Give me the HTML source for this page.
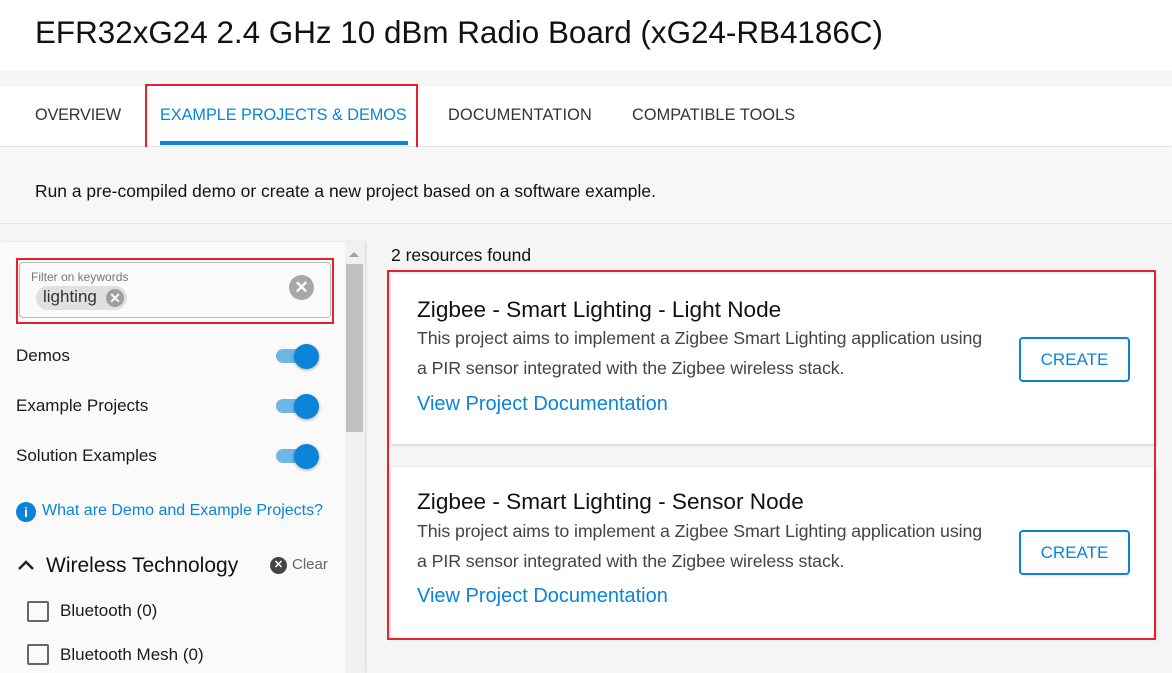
<!DOCTYPE html>
<html><head><meta charset="utf-8"><style>
*{box-sizing:border-box;margin:0;padding:0}
body{width:1172px;height:673px;overflow:hidden;background:#f5f5f5;font-family:"Liberation Sans",Arial,sans-serif;color:#1a1a1a;position:relative}
.abs{position:absolute;white-space:nowrap}
.red{position:absolute;border:2px solid #e8202a}
.tog{position:absolute;left:276px;width:42px;height:26px}
.tog .tr{position:absolute;left:0;top:6px;width:38px;height:14px;border-radius:7px;background:#6cb6e8}
.tog .kn{position:absolute;left:18px;top:1px;width:25px;height:25px;border-radius:50%;background:#0a84d8;box-shadow:0 1px 3px rgba(0,0,0,.35)}
.cb{position:absolute;left:27px;width:22px;height:21px;border:2px solid #666;border-radius:2px}
.card{position:absolute;left:391px;width:765px;background:#fff;box-shadow:0 1px 3px rgba(0,0,0,.18)}
.card h3{position:absolute;left:26px;font-size:22.6px;font-weight:normal;color:#111;top:23px;white-space:nowrap}
.card p{position:absolute;left:26px;top:49px;font-size:17.8px;line-height:30px;color:#444;width:578px;letter-spacing:-0.1px}
.card a{position:absolute;left:26px;top:119px;font-size:20px;color:#0a84d8;text-decoration:none;white-space:nowrap}
.btn{position:absolute;left:628px;top:63px;width:111px;height:45px;border:2px solid #0a84d8;border-radius:4px;color:#0a84d8;font-size:17px;text-align:center;line-height:41px}
</style></head><body>
<div class="abs" style="left:0;top:0;width:1172px;height:71px;background:#fff"></div>
<div class="abs" style="left:35px;top:15px;font-size:31.4px;color:#111">EFR32xG24 2.4 GHz 10 dBm Radio Board (xG24-RB4186C)</div>
<div class="abs" style="left:0;top:86px;width:1172px;height:60px;background:#fff;box-shadow:0 1px 2px rgba(0,0,0,.1)"></div>
<div class="abs" style="left:35px;top:106px;font-size:16.3px;color:#333;letter-spacing:-0.2px">OVERVIEW</div>
<div class="abs" style="left:160px;top:106px;font-size:16.3px;color:#0a84d8;letter-spacing:-0.05px">EXAMPLE PROJECTS &amp; DEMOS</div>
<div class="abs" style="left:160px;top:141px;width:248px;height:4px;background:#0a84d8"></div>
<div class="abs" style="left:448px;top:106px;font-size:16.3px;color:#333;letter-spacing:0.2px">DOCUMENTATION</div>
<div class="abs" style="left:632px;top:106px;font-size:16.3px;color:#333;letter-spacing:0.1px">COMPATIBLE TOOLS</div>
<div class="red" style="left:145px;top:84px;width:273px;height:77px"></div>
<div class="abs" style="left:0;top:147px;width:1172px;height:77px;background:#f7f7f7;border-bottom:1px solid #e2e2e2"></div>
<div class="abs" style="left:35px;top:181px;font-size:17.4px;color:#111;letter-spacing:0.03px">Run a pre-compiled demo or create a new project based on a software example.</div>

<div class="abs" style="left:0;top:242px;width:365px;height:431px;background:#fafafa;box-shadow:1px 0 2px rgba(0,0,0,.12)"></div>
<div class="abs" style="left:345px;top:242px;width:20px;height:431px;background:#f1f1f1"></div>
<div class="abs" style="left:346px;top:264px;width:17px;height:168px;background:#c1c1c1"></div>
<div class="abs" style="left:349px;top:252px;width:0;height:0;border-left:5px solid transparent;border-right:5px solid transparent;border-bottom:5px solid #a3a3a3"></div>
<div class="abs" style="left:19px;top:262px;width:312px;height:56px;border:1px solid #bbb;border-radius:4px;background:#fafafa"></div>
<div class="red" style="left:16px;top:258px;width:318px;height:66px"></div>
<div class="abs" style="left:31px;top:270px;font-size:12px;color:#777">Filter on keywords</div>
<div class="abs" style="left:36px;top:286px;width:91px;height:24px;border-radius:12px;background:#e0e0e0"></div>
<div class="abs" style="left:43px;top:287px;font-size:17px;color:#333">lighting</div>
<div class="abs" style="left:106px;top:289px;width:18px;height:18px;border-radius:50%;background:#9e9e9e;color:#fff;font-size:14px;line-height:18px;text-align:center;font-weight:bold">✕</div>
<div class="abs" style="left:289px;top:275px;width:25px;height:25px;border-radius:50%;background:#a8a8a8;color:#fff;font-size:17px;line-height:25px;text-align:center;font-weight:bold">✕</div>

<div class="abs" style="left:16px;top:346px;font-size:17px">Demos</div>
<div class="tog" style="top:343px"><div class="tr"></div><div class="kn"></div></div>
<div class="abs" style="left:16px;top:396px;font-size:17px">Example Projects</div>
<div class="tog" style="top:393px"><div class="tr"></div><div class="kn"></div></div>
<div class="abs" style="left:16px;top:446px;font-size:17px">Solution Examples</div>
<div class="tog" style="top:443px"><div class="tr"></div><div class="kn"></div></div>
<div class="abs" style="left:16px;top:502px;width:20px;height:20px;border-radius:50%;background:#0a84d8;color:#fff;font-size:14px;font-weight:bold;text-align:center;line-height:20px">i</div>
<div class="abs" style="left:42px;top:502px;font-size:16px;color:#0a84d8">What are Demo and Example Projects?</div>
<svg class="abs" style="left:16px;top:558px" width="20" height="14"><path d="M3 11 L10 4 L17 11" stroke="#222" stroke-width="2.5" fill="none"/></svg>
<div class="abs" style="left:46px;top:554px;font-size:21px;color:#111">Wireless Technology</div>
<div class="abs" style="left:270px;top:557px;width:17px;height:17px;border-radius:50%;background:#444;color:#fff;font-size:11px;line-height:17px;text-align:center;font-weight:bold">✕</div>
<div class="abs" style="left:292px;top:556px;font-size:15px;color:#666">Clear</div>
<div class="cb" style="top:601px"></div>
<div class="abs" style="left:60px;top:601px;font-size:17px">Bluetooth (0)</div>
<div class="cb" style="top:644px"></div>
<div class="abs" style="left:60px;top:645px;font-size:17px">Bluetooth Mesh (0)</div>

<div class="abs" style="left:391px;top:245px;font-size:17.5px;color:#111">2 resources found</div>
<div class="card" style="top:274px;height:170px"><h3>Zigbee - Smart Lighting - Light Node</h3><p>This project aims to implement a Zigbee Smart Lighting application using a PIR sensor integrated with the Zigbee wireless stack.</p><a>View Project Documentation</a><div class="btn">CREATE</div></div>
<div class="card" style="top:467px;height:171px"><h3 style="top:22px">Zigbee - Smart Lighting - Sensor Node</h3><p style="top:49px">This project aims to implement a Zigbee Smart Lighting application using a PIR sensor integrated with the Zigbee wireless stack.</p><a style="top:118px">View Project Documentation</a><div class="btn" style="top:63px">CREATE</div></div>
<div class="red" style="left:387px;top:270px;width:769px;height:370px"></div>
</body></html>
